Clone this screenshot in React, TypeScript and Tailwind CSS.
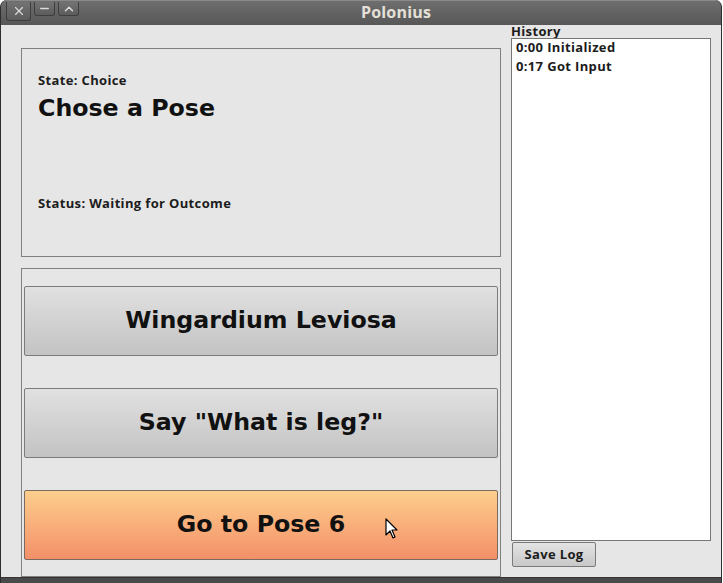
import { X, Minus, ChevronUp } from "lucide-react";

const history = [
  { time: "0:00", text: "Initialized" },
  { time: "0:17", text: "Got Input" },
];

const choices = [
  { label: "Wingardium Leviosa", hot: false },
  { label: 'Say "What is leg?"', hot: false },
  { label: "Go to Pose 6", hot: true },
];

export default function App() {
  return (
    <div className="w-[723px] h-[583px] bg-white font-['Open_Sans',sans-serif]">
      <div className="w-[722px] h-[583px] flex flex-col rounded-t-[7px] overflow-hidden bg-[#3c3c3c] border-x border-[#2e2e2e]">
        {/* ---- TITLE BAR ---- */}
        <div className="h-[25px] flex items-start bg-gradient-to-b from-[#6e6e6e] to-[#575757] border-t border-[#8a8a8a] relative">
          <div className="flex items-start pl-[5px] pt-[1px] gap-[3px]">
            <WinButton w="w-[25px]" h="h-[19px]">
              <X size={14} strokeWidth={2} />
            </WinButton>
            <WinButton w="w-[21px]" h="h-[14px]">
              <Minus size={13} strokeWidth={2.5} />
            </WinButton>
            <WinButton w="w-[21px]" h="h-[14px]">
              <ChevronUp size={14} strokeWidth={2.5} />
            </WinButton>
          </div>
          <div className="flex-1 text-center text-[16px] leading-[22px] font-bold tracking-[0.2px] text-[#e4e0d8] pr-[8px]">
            Polonius
          </div>
        </div>

        {/* ---- BODY ---- */}
        <div className="flex-1 bg-[#e6e6e6] flex pl-[20px] text-[#1c1c1c] tracking-[0.35px]">
          {/* left column */}
          <div className="w-[480px] flex flex-col pt-[23px]">
            <div className="h-[209px] border border-[#808080] pl-[16px] pt-[23px] flex flex-col">
              <div className="text-[13px] font-bold leading-[16px]">State: Choice</div>
              <div className="text-[23.7px] font-bold leading-[30px] mt-[5px] tracking-normal font-['DejaVu_Sans',sans-serif] text-[#111]">
                Chose a Pose
              </div>
              <div className="text-[13px] font-bold leading-[16px] mt-[72px]">
                Status: Waiting for Outcome
              </div>
            </div>

            <div className="flex-1 mt-[11px] border border-[#808080] px-[2px] pt-[17px] flex flex-col gap-[32px]">
              {choices.map((c) => (
                <button
                  key={c.label}
                  className={
                    "relative h-[70px] w-full border rounded-[2px] text-[23.7px] font-bold tracking-normal font-['DejaVu_Sans',sans-serif] text-[#111] " +
                    (c.hot
                      ? "border-[#7a6a60] bg-gradient-to-b from-[#fcce8c] to-[#f38f69]"
                      : "border-[#7c7c7c] bg-gradient-to-b from-[#e1e1e1] to-[#c3c3c3]")
                  }
                >
                  {c.label}
                  {c.hot && (
                    <svg
                      className="absolute left-[360px] top-[27px]"
                      width="14"
                      height="22"
                      viewBox="0 0 14 22"
                    >
                      <path
                        d="M1 1 L1 17 L5 13 L8 20 L10 19 L7 12 L12 12 Z"
                        fill="#fff"
                        stroke="#000"
                        strokeWidth="1.2"
                        strokeLinejoin="round"
                      />
                    </svg>
                  )}
                </button>
              ))}
            </div>
          </div>

          {/* right column */}
          <div className="w-[200px] ml-[10px] flex flex-col">
            <div className="text-[13px] font-bold leading-[13px] h-[13px]">History</div>
            <div className="h-[503px] bg-white border border-[#777] px-[4px] flex flex-col gap-[2px]">
              {history.map((h) => (
                <div key={h.time} className="text-[13px] font-bold leading-[17px]">
                  {h.time} {h.text}
                </div>
              ))}
            </div>
            <button className="mt-[1px] ml-[1px] w-[84px] h-[25px] border border-[#7a7a7a] rounded-[2px] bg-gradient-to-b from-[#e4e4e4] to-[#c8c8c8] text-[13px] font-bold">
              Save Log
            </button>
          </div>
        </div>
        <div className="h-[6px] bg-[#4a4a4a] border-t border-[#333]" />
      </div>
    </div>
  );
}

function WinButton({ w, h, children }: { w: string; h: string; children: React.ReactNode }) {
  return (
    <div
      className={`${w} ${h} flex items-center justify-center rounded-b-[3px] border border-t-0 border-[#3e3e3e] bg-gradient-to-b from-[#737373] to-[#5c5c5c] text-[#dcdcdc]`}
    >
      {children}
    </div>
  );
}
